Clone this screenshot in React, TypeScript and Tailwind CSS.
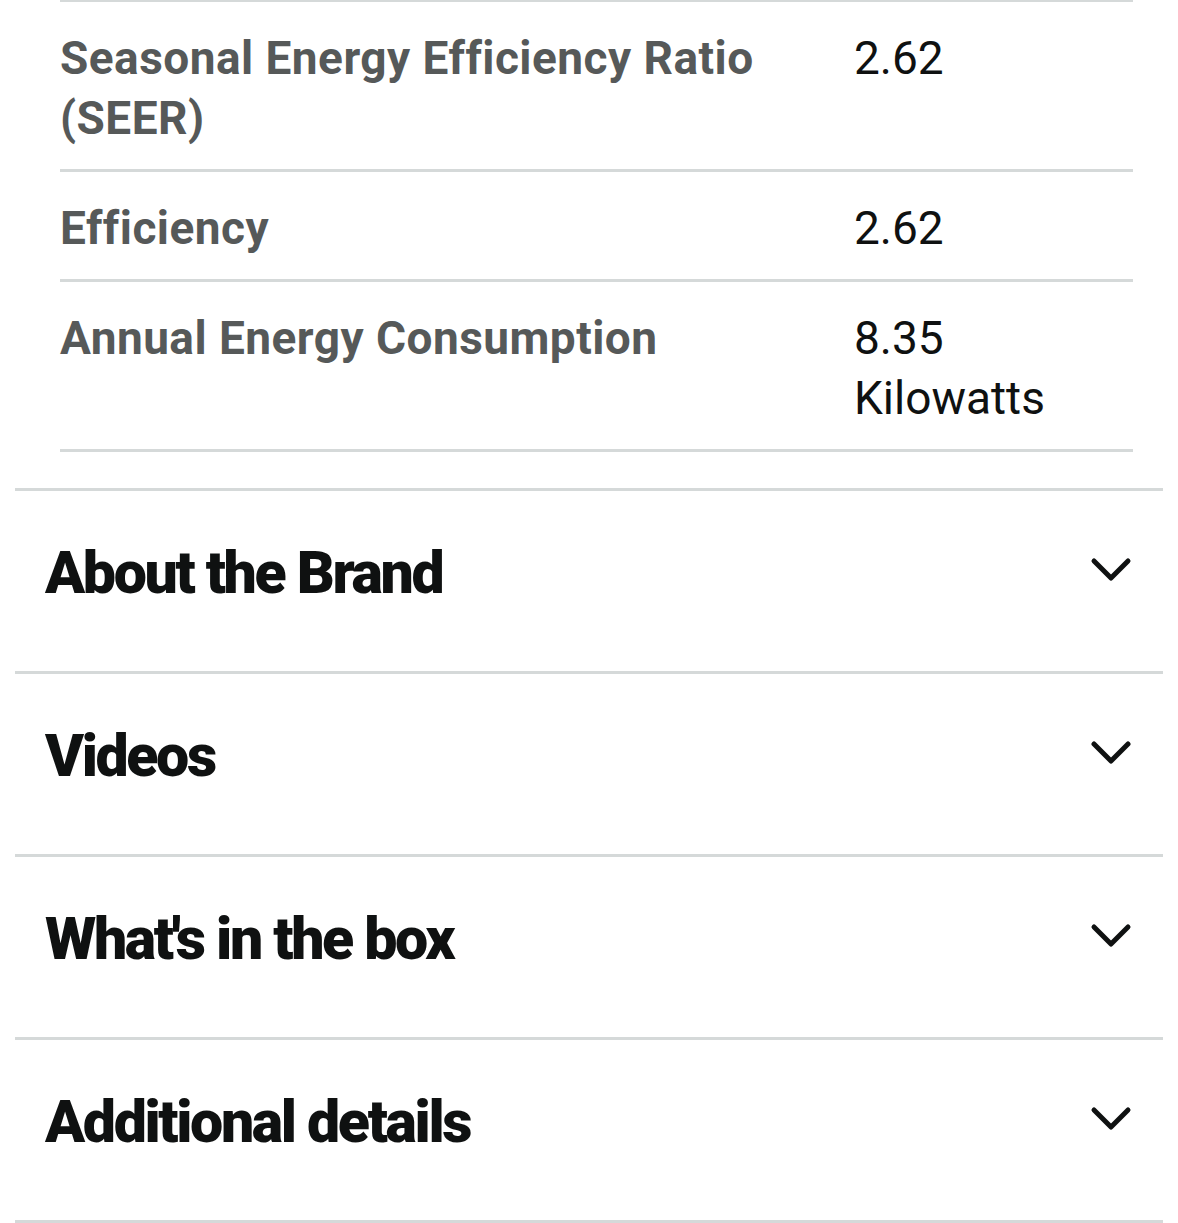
import React from 'react';

type SpecRow = { label: string; value: string };

const specs: SpecRow[] = [
  { label: 'Seasonal Energy Efficiency Ratio (SEER)', value: '2.62' },
  { label: 'Efficiency', value: '2.62' },
  { label: 'Annual Energy Consumption', value: '8.35 Kilowatts' },
];

const sections = ['About the Brand', 'Videos', "What's in the box", 'Additional details'];

function Chevron() {
  return (
    <svg width="42" height="28" viewBox="0 0 42 28" fill="none" className="shrink-0 mb-[6px]">
      <polyline
        points="4,5 21,22 38,5"
        stroke="#0f1111"
        strokeWidth="5"
        strokeLinecap="round"
        strokeLinejoin="round"
      />
    </svg>
  );
}

export default function App() {
  return (
    <div className="w-[1178px] min-h-[1223px] bg-white font-['Roboto',sans-serif] overflow-hidden">
      {/* spec table */}
      <div className="ml-[60px] mr-[45px]">
        {specs.map((row, i) => (
          <div
            key={row.label}
            className={`grid grid-cols-[794px_1fr] pt-[26px] pb-[21px] border-[#d5d9d9] ${
              i === 0 ? 'border-t-2' : 'border-t-[3px]'
            }`}
          >
            <div className="pr-[40px] text-[46px] leading-[60px] font-bold tracking-[0.01em] text-[#565959]">
              {row.label}
            </div>
            <div className="text-[46px] leading-[60px] text-[#0f1111]">{row.value}</div>
          </div>
        ))}
        <div className="border-t-[3px] border-[#d5d9d9]" />
      </div>

      {/* collapsible sections */}
      <div className="mx-[15px] mt-[36px] border-b-[3px] border-[#d5d9d9]">
        {sections.map((title) => (
          <button
            key={title}
            className="w-full flex items-center justify-between border-t-[3px] border-[#d5d9d9] pl-[30px] pr-[31px] pt-[46px] pb-[62px] text-left"
          >
            <span className="text-[59px] leading-[72px] font-black tracking-[-0.04em] text-[#0f1111]">{title}</span>
            <Chevron />
          </button>
        ))}
      </div>
    </div>
  );
}
